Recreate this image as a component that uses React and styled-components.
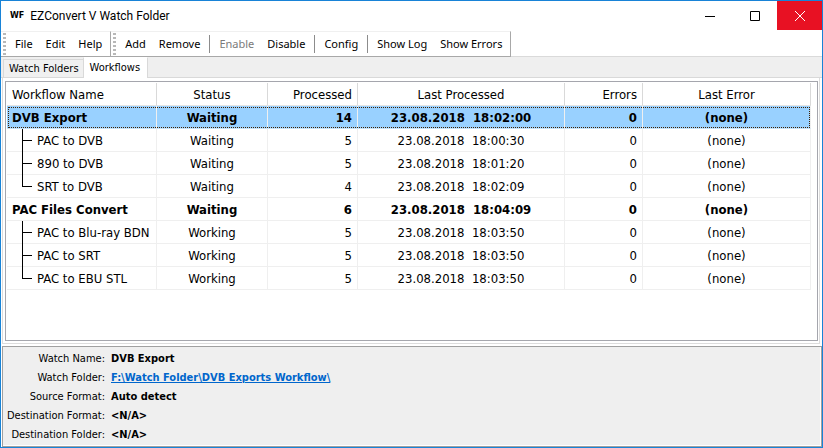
import React, { useState } from "react";
import styled, { createGlobalStyle, css } from "styled-components";

const GlobalStyle = createGlobalStyle`
  *, *::before, *::after { box-sizing: border-box; }
  body { margin: 0; background: #fff; }
`;

const uiFont = `"DejaVu Sans Condensed", "DejaVu Sans", sans-serif`;
const menuFont = `"Noto Sans", sans-serif`;

const Window = styled.div`
  display: flex;
  flex-direction: column;
  min-height: 100vh;
  border: 1px solid #1883d7;
  background: #fff;
  color: #000;
  font-family: ${uiFont};
  font-size: 13px;
`;

const TitleBar = styled.header`
  display: flex;
  align-items: stretch;
  height: 30px;
  padding-left: 9px;
`;

const Logo = styled.span`
  margin-right: 6px;
  font: 700 8px/30px "DejaVu Sans", sans-serif;
`;

const Title = styled.h1`
  flex: 1;
  margin: 0;
  font: 400 12px/30px Roboto, sans-serif;
`;

const WindowButton = styled.button`
  display: grid;
  place-items: center;
  width: 45px;
  height: 29px;
  padding: 0;
  border: 0;
  background: ${(p) => (p.$close ? "#e81123" : "transparent")};
  color: ${(p) => (p.$close ? "#fff" : "#000")};
`;

const ToolbarArea = styled.div`
  display: flex;
  border-bottom: 1px solid #dadada;
`;

const Toolbar = styled.div`
  display: flex;
  align-items: center;
  gap: 1px;
  height: 26px;
  margin-bottom: -1px;
  padding-right: 2px;
  border: 1px solid #a8a8a8;
  border-top-color: #f0f0f0;
  border-left: 0;
`;

const Grip = styled.span`
  width: 3px;
  height: 22px;
  margin: 0 2px;
  background: repeating-linear-gradient(#b8b8b8 0 2px, transparent 2px 4px);
`;

const ToolButton = styled.button`
  padding: 0 6px;
  border: 0;
  background: none;
  color: #000;
  font: 11px/20px ${menuFont};
  white-space: nowrap;

  &:disabled { color: #7a7a7a; }
`;

const Separator = styled.span`
  width: 1px;
  height: 18px;
  margin: 0 2px;
  background: #8c8c8c;
`;

const TabStrip = styled.div`
  display: flex;
  align-items: flex-end;
  height: 21px;
  padding-left: 2px;
  background: #efefef;
  box-shadow: inset 0 -1px #d9d9d9;
`;

const Tab = styled.button`
  padding: 0 6px;
  border: 1px solid #d9d9d9;
  background: #f0f0f0;
  font: 11px/16px ${uiFont};
  height: 19px;
  color: #000;
  white-space: nowrap;

  ${(p) =>
    p.$active
      ? css`
          height: 21px;
          padding: 0 7px 1px 6px;
          border-bottom: 0;
          border-top-color: #fff;
          background: #fff;
        `
      : css`
          padding: 1px 4px 0 5px;
          border-right: 0;
        `}
`;

const TabPane = styled.main`
  flex: 1;
  display: flex;
  margin: 0 2px 2px 1px;
  padding: 3px 1px 2px 2px;
  border: solid #dcdcdc;
  border-width: 0 1px 1px;
`;

const ListFrame = styled.div`
  flex: 1;
  padding: 1px 6px 0 1px;
  border: 1px solid #a5a6ad;
`;

const Table = styled.table`
  width: 100%;
  table-layout: fixed;
  border-spacing: 0;
`;

const Col = styled.col`
  width: ${(p) => (p.$width ? `${p.$width}px` : "auto")};
`;

const alignCss = css`
  height: 23px;
  padding: ${(p) => (p.$align === "center" ? "2px 0 0" : "2px 5px 0")};
  line-height: 20px;
  text-align: ${(p) => p.$align};
  white-space: pre;
`;

const HeadCell = styled.th`
  ${alignCss}
  border-right: 1px solid #d9d9d9;
  border-bottom: 1px solid #e4e4e4;
  font-weight: 400;
`;

const Cell = styled.td`
  ${alignCss}
  border-right: 1px solid #efefef;
  border-bottom: 1px solid #efefef;
`;

const Row = styled.tr`
  font-weight: ${(p) => (p.$group ? 700 : 400)};

  ${(p) =>
    p.$selected &&
    css`
      background: #99d1ff;
      outline: 1px dotted #402000;
      outline-offset: -2px;

      ${Cell} { border-bottom-color: #c4e2f8; }
    `}
`;

const Leaf = styled.span`
  display: flex;
  height: 20px;
  padding-left: 10px;
  gap: 5px;
`;

const BranchSvg = styled.svg`
  flex: none;
  margin-top: -2px;
  overflow: visible;
`;

const Details = styled.dl`
  display: grid;
  grid-template-columns: 102px 1fr;
  column-gap: 6px;
  margin: 0 0 0 1px;
  padding: 2px 0;
  border: 1px solid #a0a0a0;
  background: #efefef;
  box-shadow: inset -1px -1px #fff;
  font-size: 11px;
  line-height: 19px;
`;

const Term = styled.dt`
  text-align: right;
  white-space: nowrap;
`;

const Value = styled.dd`
  margin: 0;
  font-weight: 700;
`;

const FolderLink = styled.a`
  color: #0066cc;
`;

function Branch({ last }) {
  return (
    <BranchSvg width="10" height="23" aria-hidden="true">
      <path d={`M.5 0V${last ? 12 : 23}M0 11.5H10`} stroke="#000" fill="none" />
    </BranchSvg>
  );
}

const columns = [
  { title: "Workflow Name", width: 150, align: "left" },
  { title: "Status", width: 111, align: "center" },
  { title: "Processed", width: 90, align: "right" },
  { title: "Last Processed", width: 207, align: "center" },
  { title: "Errors", width: 78, align: "right" },
  { title: "Last Error", align: "center" },
];

const rows = [
  { group: true, values: ["DVB Export", "Waiting", "14", "23.08.2018  18:02:00", "0", "(none)"] },
  { values: ["PAC to DVB", "Waiting", "5", "23.08.2018  18:00:30", "0", "(none)"] },
  { values: ["890 to DVB", "Waiting", "5", "23.08.2018  18:01:20", "0", "(none)"] },
  { last: true, values: ["SRT to DVB", "Waiting", "4", "23.08.2018  18:02:09", "0", "(none)"] },
  { group: true, values: ["PAC Files Convert", "Waiting", "6", "23.08.2018  18:04:09", "0", "(none)"] },
  { values: ["PAC to Blu-ray BDN", "Working", "5", "23.08.2018  18:03:50", "0", "(none)"] },
  { values: ["PAC to SRT", "Working", "5", "23.08.2018  18:03:50", "0", "(none)"] },
  { last: true, values: ["PAC to EBU STL", "Working", "5", "23.08.2018  18:03:50", "0", "(none)"] },
];

export default function App() {
  const [selected, setSelected] = useState(0);

  return (
    <>
      <GlobalStyle />
      <Window>
        <TitleBar>
          <Logo>WF</Logo>
          <Title>EZConvert V Watch Folder</Title>
          <WindowButton aria-label="Minimize">
            <svg width="10" height="10"><path d="M0 5.5H10" stroke="currentColor" /></svg>
          </WindowButton>
          <WindowButton aria-label="Maximize">
            <svg width="10" height="10"><path d="M.5 .5H9.5V9.5H.5Z" stroke="currentColor" fill="none" /></svg>
          </WindowButton>
          <WindowButton $close aria-label="Close">
            <svg width="10" height="10"><path d="M0 0L10 10M10 0L0 10" stroke="currentColor" /></svg>
          </WindowButton>
        </TitleBar>

        <ToolbarArea>
          <Toolbar role="menubar">
            <Grip />
            <ToolButton role="menuitem">File</ToolButton>
            <ToolButton role="menuitem">Edit</ToolButton>
            <ToolButton role="menuitem">Help</ToolButton>
          </Toolbar>
          <Toolbar role="toolbar">
            <Grip />
            <ToolButton>Add</ToolButton>
            <ToolButton>Remove</ToolButton>
            <Separator />
            <ToolButton disabled>Enable</ToolButton>
            <ToolButton>Disable</ToolButton>
            <Separator />
            <ToolButton>Config</ToolButton>
            <Separator />
            <ToolButton>Show Log</ToolButton>
            <ToolButton>Show Errors</ToolButton>
          </Toolbar>
        </ToolbarArea>

        <TabStrip role="tablist">
          <Tab role="tab" aria-selected="false">Watch Folders</Tab>
          <Tab role="tab" aria-selected="true" $active>Workflows</Tab>
        </TabStrip>

        <TabPane>
          <ListFrame>
            <Table>
              <colgroup>
                {columns.map((c) => <Col key={c.title} $width={c.width} />)}
              </colgroup>
              <thead>
                <tr>
                  {columns.map((c) => <HeadCell key={c.title} $align={c.align}>{c.title}</HeadCell>)}
                </tr>
              </thead>
              <tbody>
                {rows.map((row, i) => (
                  <Row key={row.values[0]} $group={row.group} $selected={i === selected} onClick={() => setSelected(i)}>
                    {row.values.map((value, j) => (
                      <Cell key={columns[j].title} $align={columns[j].align}>
                        {j === 0 && !row.group ? <Leaf><Branch last={row.last} />{value}</Leaf> : value}
                      </Cell>
                    ))}
                  </Row>
                ))}
              </tbody>
            </Table>
          </ListFrame>
        </TabPane>

        <Details>
          <Term>Watch Name:</Term>
          <Value>DVB Export</Value>
          <Term>Watch Folder:</Term>
          <Value><FolderLink href="#folder">F:\Watch Folder\DVB Exports Workflow\</FolderLink></Value>
          <Term>Source Format:</Term>
          <Value>Auto detect</Value>
          <Term>Destination Format:</Term>
          <Value>&lt;N/A&gt;</Value>
          <Term>Destination Folder:</Term>
          <Value>&lt;N/A&gt;</Value>
        </Details>
      </Window>
    </>
  );
}
